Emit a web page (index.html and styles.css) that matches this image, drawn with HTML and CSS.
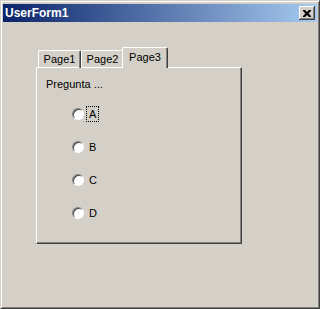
FILE: index.html
```html
<!DOCTYPE html>
<html>
<head>
  <link rel="stylesheet" href="styles.css">
</head>
<body>
  <div class="window">
    <div class="titlebar">
      <span class="title">UserForm1</span>
      <span class="close-btn">
        <svg width="8" height="7" viewBox="0 0 8 7">
          <path d="M0 0h2l2 2 2-2h2v1l-2.5 2.5 2.5 2.5v1h-2l-2-2-2 2h-2v-1l2.5-2.5-2.5-2.5z" fill="#000"/>
        </svg>
      </span>
    </div>

    <div class="client">
      <div class="tabs">
        <div class="tab">Page1</div>
        <div class="tab">Page2</div>
        <div class="tab selected">Page3</div>
      </div>
      <div class="page">
        <p class="question">Pregunta ...</p>
        <div class="options">
          <div class="option"><span class="radio"></span><span class="label focused">A</span></div>
          <div class="option"><span class="radio"></span><span class="label">B</span></div>
          <div class="option"><span class="radio"></span><span class="label">C</span></div>
          <div class="option"><span class="radio"></span><span class="label">D</span></div>
        </div>
      </div>
    </div>
  </div>
</body>
</html>
```

FILE: styles.css
```css
body {
  margin: 0;
  background-color: #d4d0c8;
  font-family: "Liberation Sans", Arial, sans-serif;
  font-size: 11px;
  color: #000;
}

.window {
  width: 320px;
  height: 309px;
  box-sizing: border-box;
  padding: 2px;
  border: 1px solid;
  border-color: #d4d0c8 #404040 #404040 #d4d0c8;
  box-shadow: inset 1px 1px #fff, inset -1px -1px #808080;
  background-color: #d4d0c8;
}

.titlebar {
  height: 18px;
  margin-top: 1px;
  padding: 0 2px 0 2px;
  display: flex;
  align-items: center;
  justify-content: space-between;
  background: linear-gradient(to right, #0a246a, #a6caf0);
}

.title {
  color: #fff;
  font-weight: bold;
  font-size: 12px;
}

.close-btn {
  width: 16px;
  height: 14px;
  display: flex;
  align-items: center;
  justify-content: center;
  background-color: #d4d0c8;
  box-shadow: inset -1px -1px #404040, inset 1px 1px #fff, inset -2px -2px #808080;
}

.client {
  padding: 25px 0 0 33px;
}

.tabs {
  display: flex;
  align-items: flex-end;
  height: 21px;
  margin-left: 2px;
  margin-bottom: -1px;
  position: relative;
}

.tab {
  width: 43px;
  height: 18px;
  box-sizing: border-box;
  border-left: 1px solid #fff;
  border-top: 1px solid #fff;
  border-right: 1px solid #404040;
  border-radius: 2px 2px 0 0;
  box-shadow: inset -1px 0 #808080;
  text-align: center;
  line-height: 16px;
}

.tab.selected {
  width: 46px;
  height: 21px;
  margin-left: -2px;
  line-height: 18px;
  background-color: #d4d0c8;
  position: relative;
  z-index: 1;
}

.page {
  width: 206px;
  height: 177px;
  box-sizing: border-box;
  border-left: 1px solid #fff;
  border-top: 1px solid #fff;
  border-right: 1px solid #404040;
  border-bottom: 1px solid #404040;
  box-shadow: inset -1px -1px #808080;
  padding: 10px 0 0 9px;
}

.question {
  margin: 0;
  line-height: 13px;
}

.options {
  margin: 15px 0 0 26px;
  display: flex;
  flex-direction: column;
  gap: 17px;
}

.option {
  height: 16px;
  display: flex;
  align-items: center;
}

.radio {
  width: 12px;
  height: 12px;
  box-sizing: border-box;
  border-radius: 50%;
  border: 1px solid;
  border-color: #808080 #fff #fff #808080;
  background-color: #fff;
  box-shadow: inset 1px 1px #404040;
}

.label {
  margin-left: 2px;
  padding: 0 2px;
  line-height: 14px;
  border: 1px solid transparent;
}

.label.focused {
  border: 1px dotted #000;
}
```
